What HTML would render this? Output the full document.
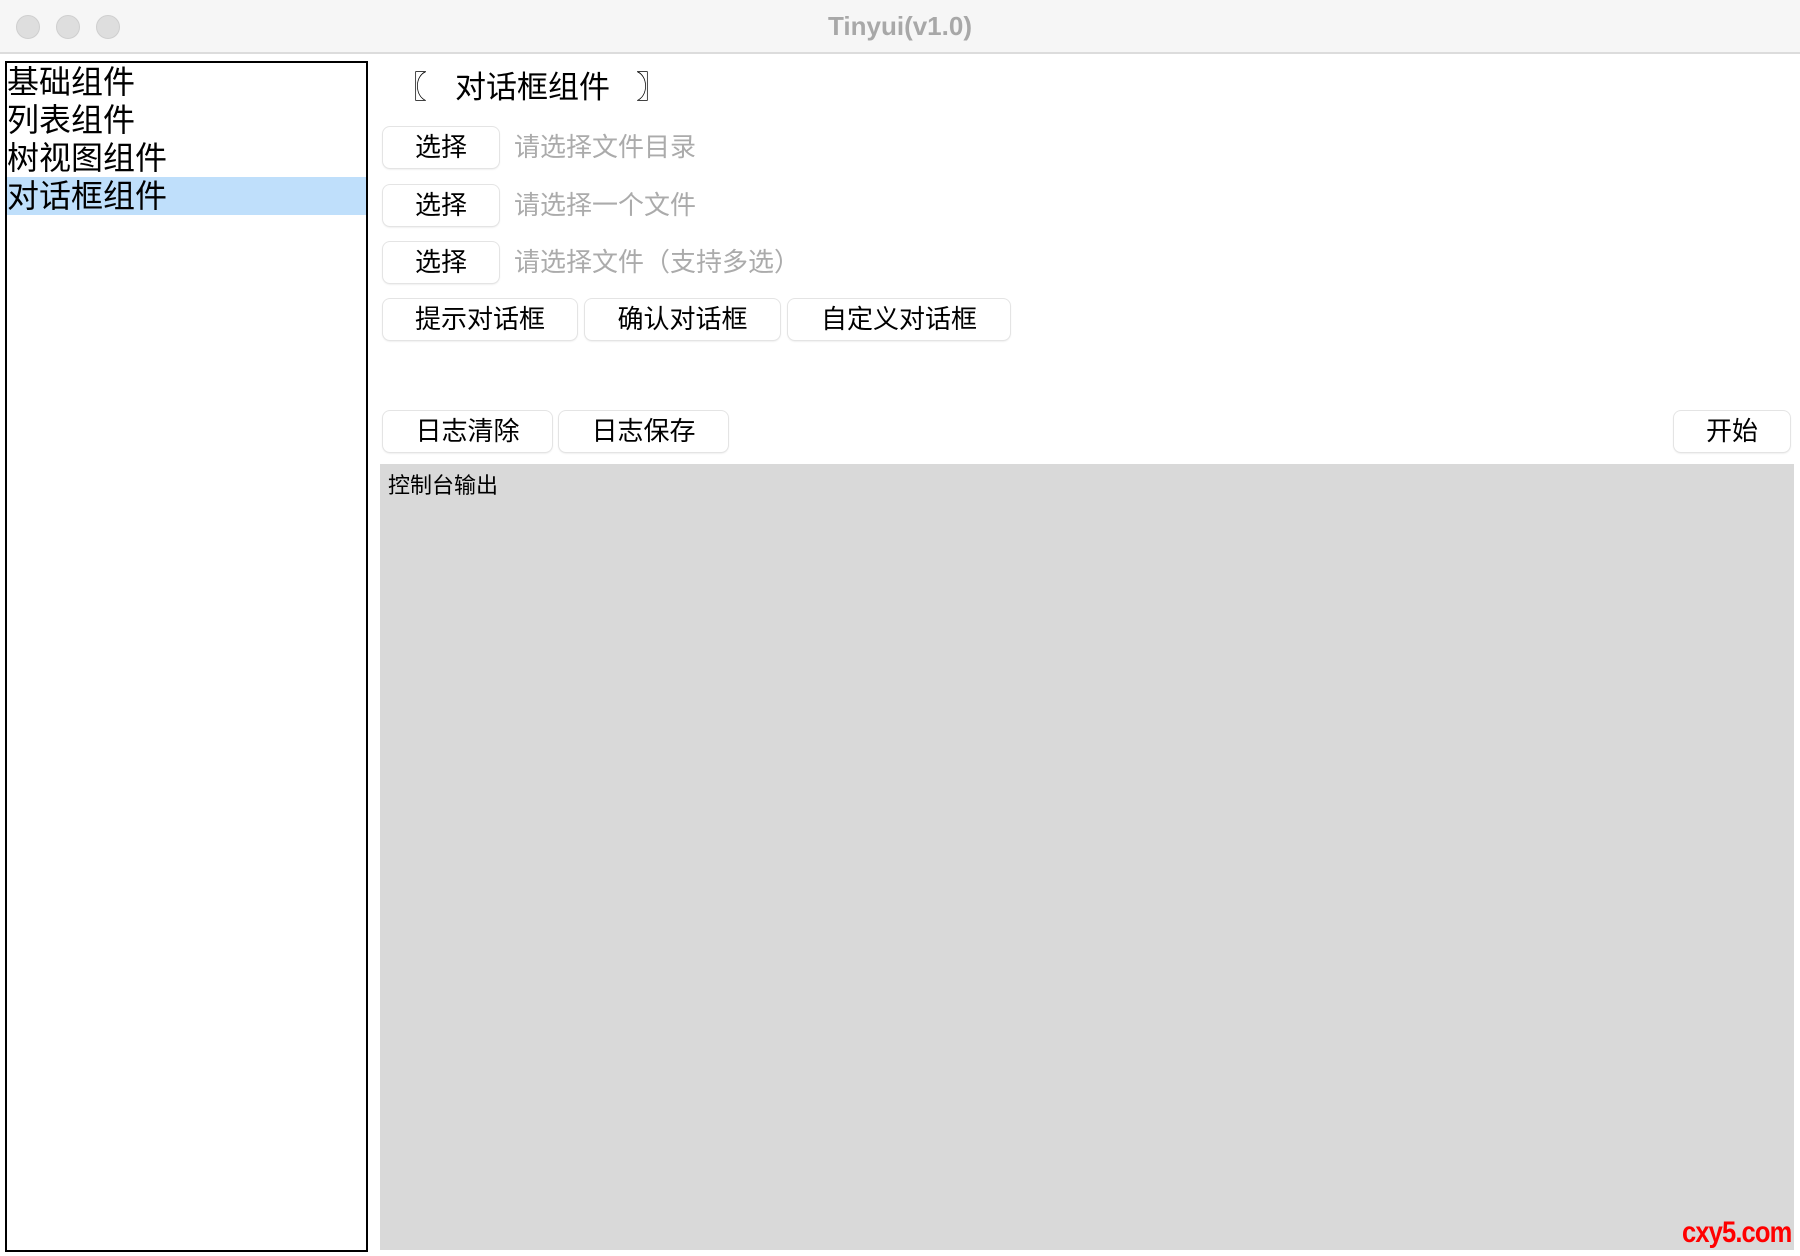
<!DOCTYPE html>
<html><head><meta charset="utf-8"><style>
*{margin:0;padding:0;box-sizing:border-box}
body{width:1800px;height:1256px;background:#fff;position:relative;overflow:hidden;font-family:"Liberation Sans","Noto Sans CJK SC",sans-serif}
.tb{position:absolute;left:0;top:0;width:1800px;height:54px;background:#f6f6f6;border-bottom:2px solid #dcdcdc}
.dot{position:absolute;top:15px;width:24px;height:24px;border-radius:50%;background:#dedede;border:1px solid #cfcfcf}
.title{position:absolute;left:0;width:1800px;top:11px;text-align:center;font-size:26px;font-weight:bold;color:#a8a8a8}
.side{position:absolute;left:5px;top:61px;width:363px;height:1191px;border:2px solid #000}
.it{position:absolute;left:0;width:359px;height:38px;font-size:32px;line-height:38px;padding-left:0;color:#000}
.sel{background:#bfdffb}
.h{position:absolute;top:62px;font-size:31px;white-space:pre}
.b{position:absolute;height:41px;background:#fff;border-radius:7px;box-shadow:0 0 0 1px #e4e4e4,0 1px 2px rgba(0,0,0,.15);font-size:26px;line-height:41px;text-align:center;color:#000}
.ph{position:absolute;left:514px;font-size:26px;color:#ababab;line-height:41px}
.con{position:absolute;left:380px;top:464px;width:1414px;height:786px;background:#d9d9d9}
.ct{position:absolute;left:8px;top:4px;font-size:22px}
.wm{position:absolute;left:1682px;top:1216px;font-size:30px;font-weight:bold;color:#f00;font-family:"Liberation Sans",sans-serif;letter-spacing:-1px;transform:scaleX(0.85);transform-origin:left top;white-space:nowrap}
</style></head><body>
<div class="tb"><div class="dot" style="left:16px"></div><div class="dot" style="left:56px"></div><div class="dot" style="left:96px"></div><div class="title">Tinyui(v1.0)</div></div>
<div class="side">
<div class="it" style="top:0">基础组件</div>
<div class="it" style="top:38px">列表组件</div>
<div class="it" style="top:76px">树视图组件</div>
<div class="it sel" style="top:114px">对话框组件</div>
</div>
<div class="h" style="left:396px">〖</div>
<div class="h" style="left:455px">对话框组件</div>
<div class="h" style="left:636px">〗</div>
<div class="b" style="left:383px;top:127px;width:116px">选择</div><div class="ph" style="top:127px">请选择文件目录</div>
<div class="b" style="left:383px;top:185px;width:116px">选择</div><div class="ph" style="top:185px">请选择一个文件</div>
<div class="b" style="left:383px;top:242px;width:116px">选择</div><div class="ph" style="top:242px">请选择文件（支持多选）</div>
<div class="b" style="left:383px;top:299px;width:194px">提示对话框</div>
<div class="b" style="left:585px;top:299px;width:195px">确认对话框</div>
<div class="b" style="left:788px;top:299px;width:222px">自定义对话框</div>
<div class="b" style="left:383px;top:411px;width:169px">日志清除</div>
<div class="b" style="left:559px;top:411px;width:169px">日志保存</div>
<div class="b" style="left:1674px;top:411px;width:116px">开始</div>
<div class="con"><div class="ct">控制台输出</div></div>
<div class="wm">cxy5.com</div>
</body></html>
